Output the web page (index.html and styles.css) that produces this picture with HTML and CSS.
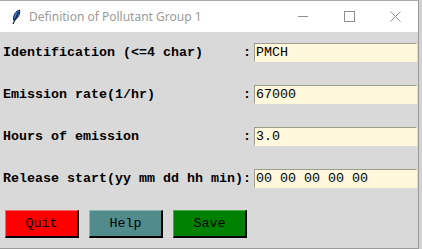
FILE: index.html
```html
<!DOCTYPE html>
<html lang="en">
<head>
    <meta charset="UTF-8">
    <title>Definition of Pollutant Group 1</title>
    <link rel="stylesheet" href="styles.css">
</head>
<body>

    <div class="window">
        <div class="titlebar">
            <svg class="app-icon" width="10" height="16" viewBox="0 0 10 16">
                <path d="M8.5 1 C5 2 2 6 2.5 11 L3.5 11.5 C7 9 9.5 5 8.5 1 Z" fill="#3f7fd8" stroke="#10203a" stroke-width="1"/>
                <path d="M7.5 3 L2 15" stroke="#10203a" stroke-width="1.2"/>
            </svg>
            <span class="title">Definition of Pollutant Group 1</span>
            <div class="controls">
                <div class="ctl">
                    <svg width="11" height="11" viewBox="0 0 11 11"><path d="M0 5.5 H10" stroke="#8f8f8f" stroke-width="1"/></svg>
                </div>
                <div class="ctl">
                    <svg width="11" height="11" viewBox="0 0 11 11"><rect x="0.5" y="0.5" width="10" height="10" fill="none" stroke="#8f8f8f" stroke-width="1"/></svg>
                </div>
                <div class="ctl">
                    <svg width="11" height="11" viewBox="0 0 11 11"><path d="M0.5 0.5 L10.5 10.5 M10.5 0.5 L0.5 10.5" stroke="#8f8f8f" stroke-width="1"/></svg>
                </div>
            </div>
        </div>

        <div class="content">
            <div class="form">
                <span class="label">Identification (&lt;=4 char)</span>
                <span class="colon">:</span>
                <input class="field" type="text" id="ident" value="PMCH">

                <span class="label">Emission rate(1/hr)</span>
                <span class="colon">:</span>
                <input class="field" type="text" id="rate" value="67000">

                <span class="label">Hours of emission</span>
                <span class="colon">:</span>
                <input class="field" type="text" id="hours" value="3.0">

                <span class="label">Release start(yy mm dd hh min)</span>
                <span class="colon">:</span>
                <input class="field" type="text" id="start" value="00 00 00 00 00">
            </div>

            <div class="buttons">
                <button class="btn quit">Quit</button>
                <button class="btn help">Help</button>
                <button class="btn save">Save</button>
            </div>
        </div>
    </div>

</body>
</html>
```

FILE: styles.css
```css
body {
    margin: 0;
    padding: 0;
    background: #d2d2d2;
}
.window {
    width: 418px;
    height: 247px;
    border-top: 1px solid #a8a8a8;
    border-right: 1px solid #9a9a9a;
    border-bottom: 1px solid #9a9a9a;
    display: flex;
    flex-direction: column;
    background: #d9d9d9;
}
.titlebar {
    height: 31px;
    background: white;
    display: flex;
    align-items: center;
}
.app-icon {
    margin-left: 11px;
    margin-top: 1px;
}
.title {
    margin-left: 8px;
    font-family: "Noto Sans", sans-serif;
    font-size: 12px;
    color: #9a9a9a;
}
.controls {
    margin-left: auto;
    display: flex;
    height: 100%;
}
.ctl {
    width: 46px;
    display: flex;
    align-items: center;
    justify-content: center;
}
.content {
    flex: 1;
    padding: 11px 1px 0 3px;
}
.form {
    display: grid;
    grid-template-columns: 240px 8px minmax(0, 1fr);
    row-gap: 23px;
    align-items: center;
}
.label, .colon {
    font-family: "Courier New", "Liberation Mono", monospace;
    font-size: 13.33px;
    font-weight: bold;
    color: black;
}
.colon {
    margin-right: 3px;
}
.field {
    grid-column: 3;
    margin-left: 3px;
    width: calc(100% - 3px);
    min-width: 0;
    height: 19px;
    box-sizing: border-box;
    padding: 0 1px;
    border-style: solid;
    border-width: 1px;
    border-color: #9f9c8c #fff8dc #fff8dc #9f9c8c;
    background: #fff8dc;
    font-family: "Courier New", "Liberation Mono", monospace;
    font-size: 13.33px;
    color: black;
    outline: none;
}
.buttons {
    display: flex;
    gap: 10px;
    margin-top: 22px;
    padding-left: 2px;
}
.btn {
    width: 74px;
    height: 28px;
    box-sizing: border-box;
    border-style: solid;
    border-width: 1px 2px 2px 1px;
    font-family: "Courier New", "Liberation Mono", monospace;
    font-size: 13.33px;
    color: black;
    padding: 0;
    cursor: pointer;
}
.quit {
    background: #ff0000;
    border-color: #ff6060 #000 #000 #ff6060;
}
.help {
    background: #528b8b;
    border-color: #8fb5b5 #000 #000 #8fb5b5;
}
.save {
    background: #008000;
    border-color: #4da64d #000 #000 #4da64d;
}
```
